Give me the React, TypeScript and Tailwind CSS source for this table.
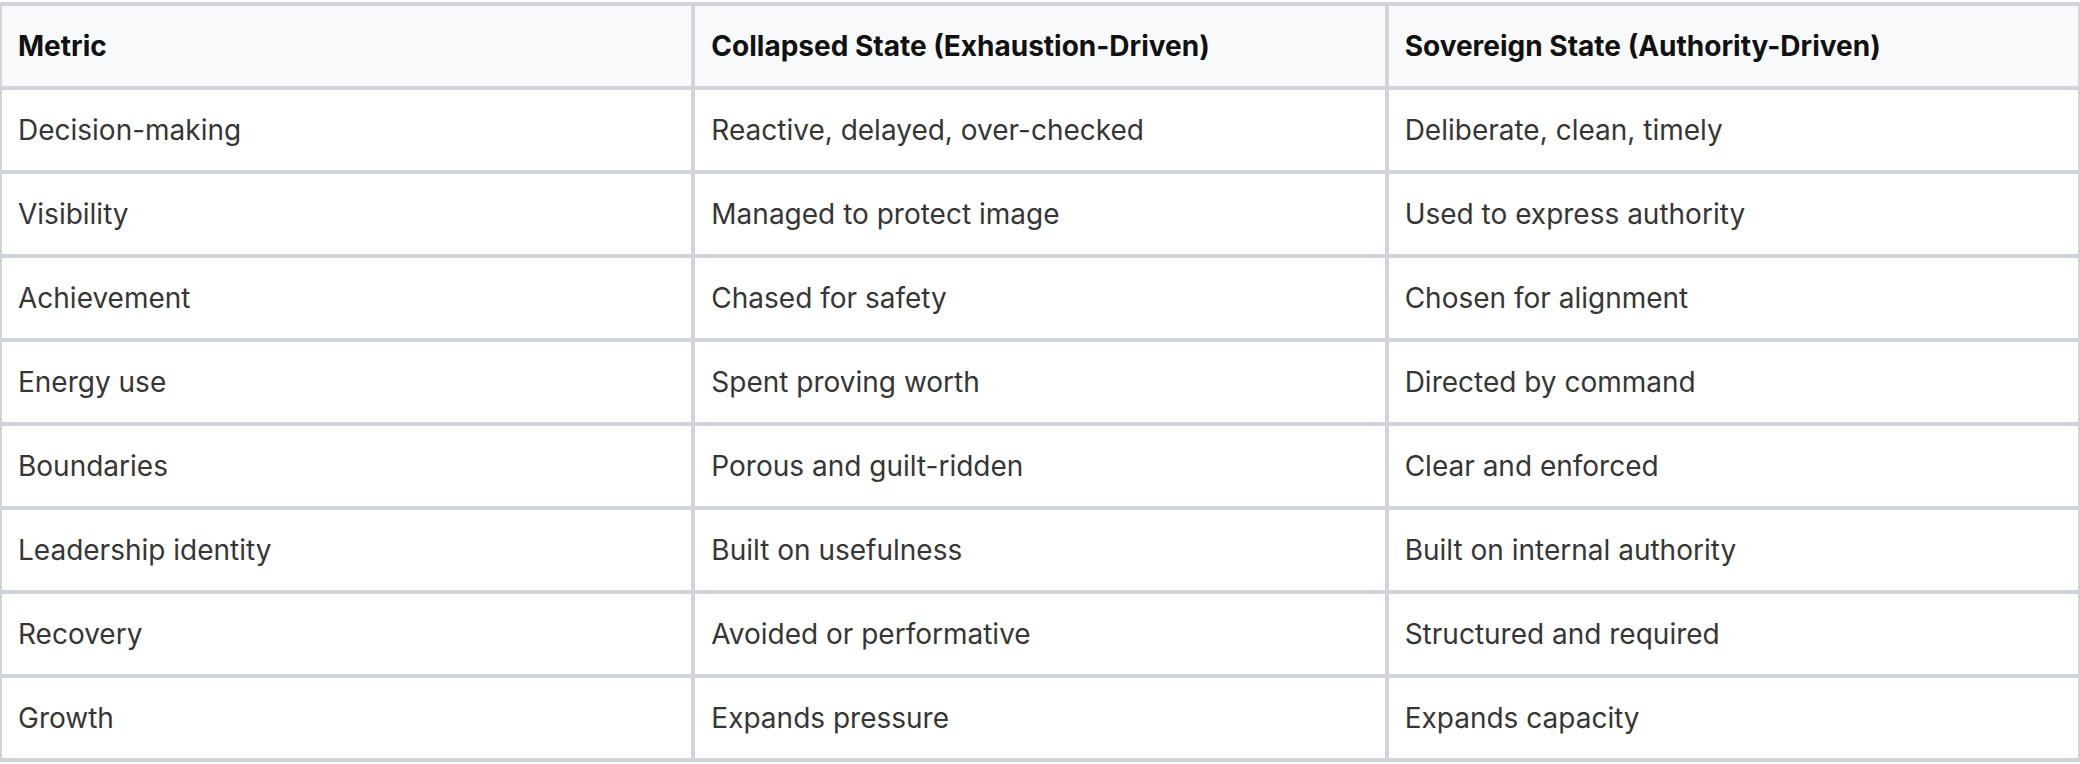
const rows: [string, string, string][] = [
  ["Decision-making", "Reactive, delayed, over-checked", "Deliberate, clean, timely"],
  ["Visibility", "Managed to protect image", "Used to express authority"],
  ["Achievement", "Chased for safety", "Chosen for alignment"],
  ["Energy use", "Spent proving worth", "Directed by command"],
  ["Boundaries", "Porous and guilt-ridden", "Clear and enforced"],
  ["Leadership identity", "Built on usefulness", "Built on internal authority"],
  ["Recovery", "Avoided or performative", "Structured and required"],
  ["Growth", "Expands pressure", "Expands capacity"],
];

const headers = ["Metric", "Collapsed State (Exhaustion-Driven)", "Sovereign State (Authority-Driven)"];

export default function App() {
  return (
    <div className="w-[2080px] bg-white py-[2px] font-['Inter',sans-serif]">
      <table className="w-full table-fixed border-separate border-spacing-0 border-y-2 border-[#d1d5db]">
        <thead>
          <tr className="bg-[#f8f9fa]">
            {headers.map((h) => (
              <th
                key={h}
                className="h-[84px] w-1/3 border-2 border-[#d1d5db] px-4 text-left text-[28px] font-bold leading-[40px] text-[#111111]"
              >
                {h}
              </th>
            ))}
          </tr>
        </thead>
        <tbody>
          {rows.map((r) => (
            <tr key={r[0]}>
              {r.map((c, i) => (
                <td
                  key={i}
                  className="h-[84px] border-2 border-[#d1d5db] px-4 text-left text-[28px] leading-[40px] text-[#363636]"
                >
                  {c}
                </td>
              ))}
            </tr>
          ))}
        </tbody>
      </table>
    </div>
  );
}
